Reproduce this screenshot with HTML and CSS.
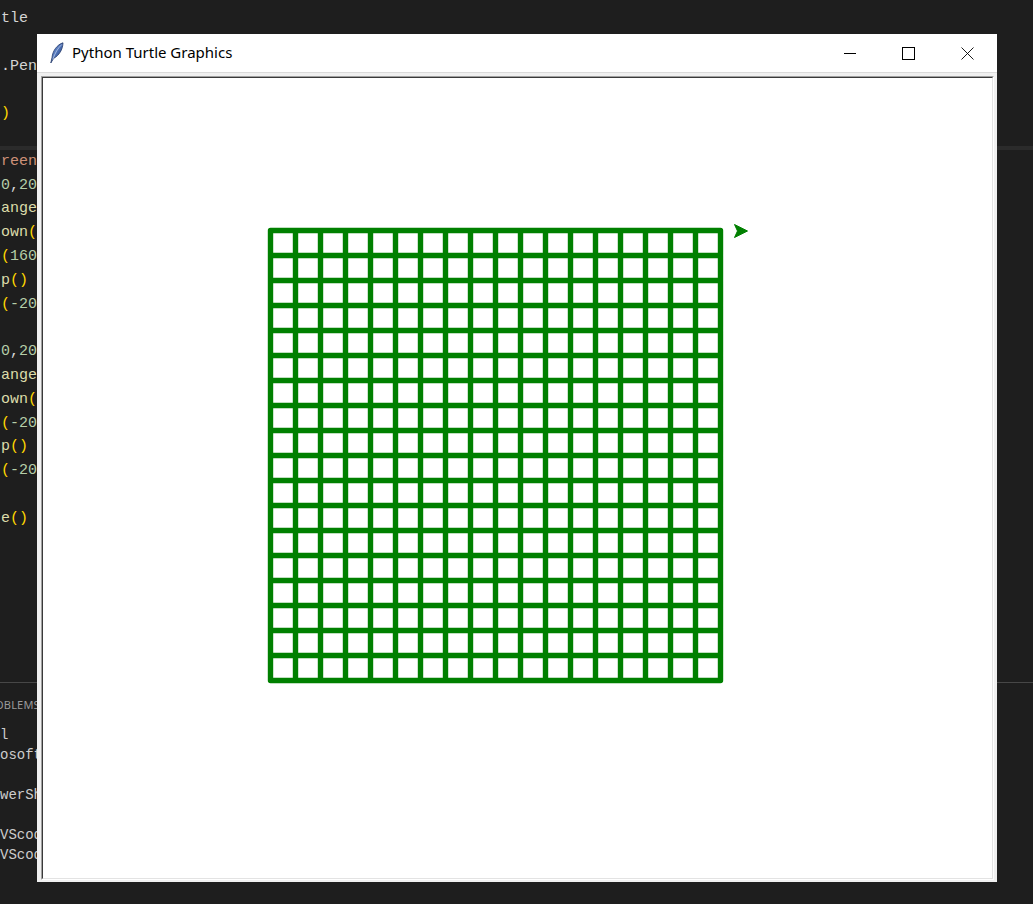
FILE: index.html
```html
<!DOCTYPE html>
<html>
<head>
<meta charset="utf-8">
<link rel="stylesheet" href="styles.css">
</head>
<body>
<div class="desktop">
  <div class="editor">
    <div class="ln"><span class="tx">tle</span></div>
    <div class="ln"></div>
    <div class="ln"><span class="tx">.Pen</span><span class="br">()</span></div>
    <div class="ln"></div>
    <div class="ln"><span class="br">)</span></div>
    <div class="ln"></div>
    <div class="ln"><span class="st">reen"</span></div>
    <div class="ln"><span class="nm">0</span><span class="tx">,</span><span class="nm">20</span></div>
    <div class="ln"><span class="fn">ange</span></div>
    <div class="ln"><span class="fn">own</span><span class="br">()</span></div>
    <div class="ln"><span class="br">(</span><span class="nm">160</span></div>
    <div class="ln"><span class="fn">p</span><span class="br">()</span></div>
    <div class="ln"><span class="br">(</span><span class="nm">-20</span></div>
    <div class="ln"></div>
    <div class="ln"><span class="nm">0</span><span class="tx">,</span><span class="nm">20</span></div>
    <div class="ln"><span class="fn">ange</span></div>
    <div class="ln"><span class="fn">own</span><span class="br">()</span></div>
    <div class="ln"><span class="br">(</span><span class="nm">-20</span></div>
    <div class="ln"><span class="fn">p</span><span class="br">()</span></div>
    <div class="ln"><span class="br">(</span><span class="nm">-20</span></div>
    <div class="ln"></div>
    <div class="ln"><span class="fn">e</span><span class="br">()</span></div>
  </div>
  <div class="panel">
    <div class="tabs"><span class="tab">OBLEMS</span></div>
    <div class="term">
      <div class="tl">l</div>
      <div class="tl">osoft Corporation.</div>
      <div class="tl"></div>
      <div class="tl">werShell</div>
      <div class="tl"></div>
      <div class="tl">VScode&gt;</div>
      <div class="tl">VScode&gt;</div>
    </div>
  </div>

  <div class="window">
    <div class="titlebar">
      <svg class="feather" width="16" height="22" viewBox="0 0 16 22">
        <defs>
          <linearGradient id="fg" x1="0" y1="0" x2="1" y2="1">
            <stop offset="0" stop-color="#9db8e6"/>
            <stop offset="0.45" stop-color="#4f74ba"/>
            <stop offset="1" stop-color="#1f3670"/>
          </linearGradient>
        </defs>
        <path d="M15 0.8 C9.2 2.6 4.6 8.8 4 15.5 L2.8 21 L5.6 16.4 C11 13.6 14.8 7.6 15 0.8 Z" fill="url(#fg)" stroke="#243a6a" stroke-width="0.8"/>
        <path d="M13.8 2.5 C10 6 7 11 4.8 17.5" fill="none" stroke="#dfe8f6" stroke-width="0.6"/>
      </svg>
      <span class="title">Python Turtle Graphics</span>
      <div class="caption">
        <div class="cbtn min">
          <svg width="12" height="12" viewBox="0 0 12 12"><path d="M0 6.5H12" stroke="#000" stroke-width="1"/></svg>
        </div>
        <div class="cbtn max">
          <svg width="13" height="13" viewBox="0 0 13 13"><rect x="0.5" y="0.5" width="12" height="12" fill="none" stroke="#000" stroke-width="1"/></svg>
        </div>
        <div class="cbtn close">
          <svg width="13" height="13" viewBox="0 0 13 13"><path d="M0.5 0.5L12.5 12.5M12.5 0.5L0.5 12.5" stroke="#000" stroke-width="0.9"/></svg>
        </div>
      </div>
    </div>
    <div class="body">
      <div class="frame-outer">
        <div class="frame-inner">
          <svg class="canvas" width="949" height="800" viewBox="0 0 949 800">
            <path fill="none" stroke="#008000" stroke-width="5.4" stroke-linecap="round" stroke-linejoin="round"
              d="M227.5 152.5V602.5M252.5 152.5V602.5M277.5 152.5V602.5M302.5 152.5V602.5M327.5 152.5V602.5M352.5 152.5V602.5M377.5 152.5V602.5M402.5 152.5V602.5M427.5 152.5V602.5M452.5 152.5V602.5M477.5 152.5V602.5M502.5 152.5V602.5M527.5 152.5V602.5M552.5 152.5V602.5M577.5 152.5V602.5M602.5 152.5V602.5M627.5 152.5V602.5M652.5 152.5V602.5M677.5 152.5V602.5
                 M227.5 152.5H677.5M227.5 177.5H677.5M227.5 202.5H677.5M227.5 227.5H677.5M227.5 252.5H677.5M227.5 277.5H677.5M227.5 302.5H677.5M227.5 327.5H677.5M227.5 352.5H677.5M227.5 377.5H677.5M227.5 402.5H677.5M227.5 427.5H677.5M227.5 452.5H677.5M227.5 477.5H677.5M227.5 502.5H677.5M227.5 527.5H677.5M227.5 552.5H677.5M227.5 577.5H677.5M227.5 602.5H677.5"/>
            <polygon points="704.5,153 691.5,146.5 694.5,153 691.5,159.5" fill="#008000" stroke="#008000" stroke-width="1" stroke-linejoin="miter"/>
          </svg>
        </div>
      </div>
    </div>
  </div>
</div>
</body>
</html>
```

FILE: styles.css
```css
html, body {
  margin: 0;
  padding: 0;
}

body {
  background: #1e1e1e;
}

.desktop {
  position: relative;
  width: 1033px;
  height: 904px;
  overflow: hidden;
  background: #1e1e1e;
}

.editor {
  height: 682px;
  box-sizing: border-box;
  padding-top: 7px;
  padding-left: 1px;
  background: linear-gradient(to bottom, #1e1e1e 0, #1e1e1e 146px, #2b2b2b 146px, #2b2b2b 150px, #1e1e1e 150px);
  font-family: "Liberation Mono", "DejaVu Sans Mono", monospace;
  font-size: 15px;
}

.ln {
  height: 23.8px;
  line-height: 23.8px;
  white-space: pre;
}

.tx { color: #d4d4d4; }
.br { color: #ffd700; }
.st { color: #ce9178; }
.nm { color: #b5cea8; }
.fn { color: #dcdcaa; }

.panel {
  border-top: 1px solid #474747;
  height: 221px;
}

.tabs {
  height: 42px;
  display: flex;
  align-items: center;
}

.tab {
  margin-left: -5px;
  font-family: "Noto Sans", "Liberation Sans", sans-serif;
  font-size: 11px;
  color: #9a9a9a;
  letter-spacing: 0.2px;
}

.term {
  font-family: "Liberation Mono", "DejaVu Sans Mono", monospace;
  font-size: 14px;
  color: #cccccc;
}

.tl {
  height: 20px;
  line-height: 20px;
  white-space: pre;
}

.window {
  position: absolute;
  left: 37px;
  top: 34px;
  width: 960px;
  height: 848px;
  display: flex;
  flex-direction: column;
  background: #f0f0f0;
}

.titlebar {
  height: 38px;
  flex: none;
  background: #ffffff;
  border-bottom: 1px solid #dadada;
  display: flex;
  align-items: center;
  padding-left: 11px;
}

.feather {
  display: block;
  flex: none;
}

.title {
  margin-left: 8px;
  font-family: "Noto Sans", "Liberation Sans", sans-serif;
  font-size: 15px;
  color: #000000;
  flex: 1;
  margin-top: -2px;
}

.caption {
  display: flex;
  height: 38px;
}

.cbtn {
  height: 38px;
  display: flex;
  align-items: center;
  justify-content: center;
}

.cbtn svg { display: block; }

.min { width: 58px; }
.max { width: 58px; }
.close { width: 60px; }

.body {
  flex: 1;
  padding: 3px 3px 2px 4px;
  display: flex;
}

.frame-outer {
  border-top: 1px solid #a0a0a0;
  border-left: 1px solid #a0a0a0;
  border-right: 1px solid #ffffff;
  border-bottom: 1px solid #ffffff;
}

.frame-inner {
  border-top: 1px solid #3a3a3a;
  border-left: 1px solid #3a3a3a;
  border-right: 1px solid #e3e3e3;
  border-bottom: 1px solid #e3e3e3;
  background: #ffffff;
  width: 949px;
  height: 800px;
}

.canvas {
  display: block;
  background: #ffffff;
}
```
